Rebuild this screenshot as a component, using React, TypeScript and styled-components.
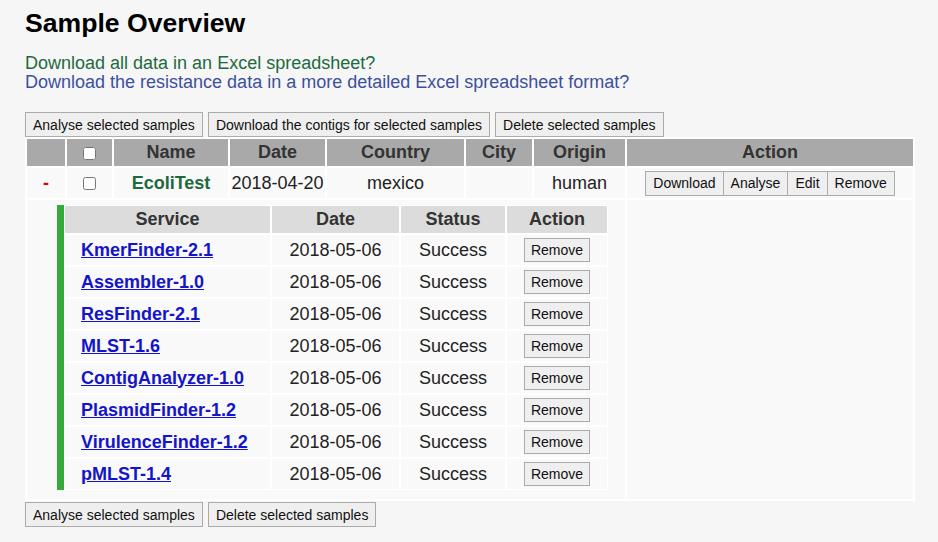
import styled, { createGlobalStyle } from "styled-components";

const GlobalStyle = createGlobalStyle`
  body {
    margin: 0;
    background-color: #f6f6f6;
    font-family: "Liberation Sans", Arial, Helvetica, sans-serif;
    color: #222;
  }
`;

const Page = styled.div`
  padding: 8px 20px 20px 25px;
`;

const Title = styled.h2`
  margin: 0 0 15px 0;
  font-size: 26.6px;
  font-weight: bold;
  color: #000;
`;

const Links = styled.div`
  display: flex;
  flex-direction: column;
  font-size: 18px;
  line-height: 19px;
  margin-bottom: 20px;
`;

const TextLink = styled.a<{ $tone: "green" | "blue" }>`
  color: ${(p) => (p.$tone === "green" ? "#1d6a3e" : "#3c509c")};
  text-decoration: none;
  cursor: pointer;
  width: fit-content;
`;

const Toolbar = styled.div<{ $bottom?: boolean }>`
  display: flex;
  gap: 5px;
  margin-top: ${(p) => (p.$bottom ? "1px" : "0")};
`;

const Button = styled.button<{ $small?: boolean }>`
  height: ${(p) => (p.$small ? "24px" : "25px")};
  padding: ${(p) => (p.$small ? "0 6px" : "0 7px")};
  font-family: "Liberation Sans", Arial, Helvetica, sans-serif;
  font-size: 14px;
  color: #111;
  background-color: #efefef;
  border: 1px solid #ababab;
  border-radius: 0;
  cursor: pointer;
  &:hover {
    background-color: #e4e4e4;
  }
`;

const ButtonGroup = styled.div`
  display: inline-flex;
  & > button + button {
    margin-left: -1px;
  }
`;

const Table = styled.table`
  table-layout: fixed;
  border-collapse: separate;
  border-spacing: 2px;
  background-color: #fff;
`;

const HeadCell = styled.th`
  height: 27px;
  padding: 0;
  background-color: #a9a9a9;
  color: #333;
  font-size: 18px;
  font-weight: bold;
  text-align: center;
`;

const Cell = styled.td`
  height: 30px;
  padding: 0;
  background-color: #f9f9f9;
  font-size: 18px;
  text-align: center;
  vertical-align: middle;
`;

const NestCell = styled.td`
  padding: 5px 0 9px 30px;
  background-color: #f9f9f9;
  vertical-align: top;
`;

const EmptyCell = styled.td`
  background-color: #f9f9f9;
`;

const Collapse = styled.span`
  color: #e00000;
  font-weight: bold;
`;

const SampleName = styled.span`
  color: #1d6a3e;
  font-weight: bold;
`;

const Check = styled.input`
  margin: 0;
  vertical-align: middle;
`;

const ServiceTable = styled.table`
  table-layout: fixed;
  border-collapse: separate;
  border-spacing: 0;
  border-left: 7px solid #37a93c;
`;

const ServiceHead = styled.th`
  height: 27px;
  padding: 0;
  border: 1px solid #fff;
  background-color: #dcdcdc;
  color: #333;
  font-size: 18px;
  font-weight: bold;
  text-align: center;
`;

const ServiceCell = styled.td<{ $left?: boolean }>`
  height: 30px;
  padding: ${(p) => (p.$left ? "0 0 0 16px" : "0")};
  border: 1px solid #fff;
  background-color: #f9f9f9;
  font-size: 18px;
  text-align: ${(p) => (p.$left ? "left" : "center")};
  vertical-align: middle;
`;

const ServiceLink = styled.a`
  color: #1414c8;
  font-weight: bold;
  text-decoration: underline;
  cursor: pointer;
`;

const services = [
  "KmerFinder-2.1",
  "Assembler-1.0",
  "ResFinder-2.1",
  "MLST-1.6",
  "ContigAnalyzer-1.0",
  "PlasmidFinder-1.2",
  "VirulenceFinder-1.2",
  "pMLST-1.4",
];

const outerCols = [38, 45, 114, 95, 137, 66, 91, 286];
const innerCols = [207, 129, 106, 102];

function App() {
  return (
    <Page>
      <GlobalStyle />
      <Title>Sample Overview</Title>
      <Links>
        <TextLink $tone="green">Download all data in an Excel spreadsheet?</TextLink>
        <TextLink $tone="blue">
          Download the resistance data in a more detailed Excel spreadsheet format?
        </TextLink>
      </Links>

      <Toolbar>
        <Button>Analyse selected samples</Button>
        <Button>Download the contigs for selected samples</Button>
        <Button>Delete selected samples</Button>
      </Toolbar>

      <Table>
        <colgroup>
          {outerCols.map((w, i) => (
            <col key={i} style={{ width: w }} />
          ))}
        </colgroup>
        <thead>
          <tr>
            <HeadCell></HeadCell>
            <HeadCell>
              <Check type="checkbox" />
            </HeadCell>
            <HeadCell>Name</HeadCell>
            <HeadCell>Date</HeadCell>
            <HeadCell>Country</HeadCell>
            <HeadCell>City</HeadCell>
            <HeadCell>Origin</HeadCell>
            <HeadCell>Action</HeadCell>
          </tr>
        </thead>
        <tbody>
          <tr>
            <Cell>
              <Collapse>-</Collapse>
            </Cell>
            <Cell>
              <Check type="checkbox" />
            </Cell>
            <Cell>
              <SampleName>EcoliTest</SampleName>
            </Cell>
            <Cell>2018-04-20</Cell>
            <Cell>mexico</Cell>
            <Cell></Cell>
            <Cell>human</Cell>
            <Cell>
              <ButtonGroup>
                <Button>Download</Button>
                <Button>Analyse</Button>
                <Button>Edit</Button>
                <Button>Remove</Button>
              </ButtonGroup>
            </Cell>
          </tr>
          <tr>
            <NestCell colSpan={7}>
              <ServiceTable>
                <colgroup>
                  {innerCols.map((w, i) => (
                    <col key={i} style={{ width: w }} />
                  ))}
                </colgroup>
                <thead>
                  <tr>
                    <ServiceHead>Service</ServiceHead>
                    <ServiceHead>Date</ServiceHead>
                    <ServiceHead>Status</ServiceHead>
                    <ServiceHead>Action</ServiceHead>
                  </tr>
                </thead>
                <tbody>
                  {services.map((s) => (
                    <tr key={s}>
                      <ServiceCell $left>
                        <ServiceLink>{s}</ServiceLink>
                      </ServiceCell>
                      <ServiceCell>2018-05-06</ServiceCell>
                      <ServiceCell>Success</ServiceCell>
                      <ServiceCell>
                        <Button $small>Remove</Button>
                      </ServiceCell>
                    </tr>
                  ))}
                </tbody>
              </ServiceTable>
            </NestCell>
            <EmptyCell></EmptyCell>
          </tr>
        </tbody>
      </Table>

      <Toolbar $bottom>
        <Button>Analyse selected samples</Button>
        <Button>Delete selected samples</Button>
      </Toolbar>
    </Page>
  );
}

export default App;
